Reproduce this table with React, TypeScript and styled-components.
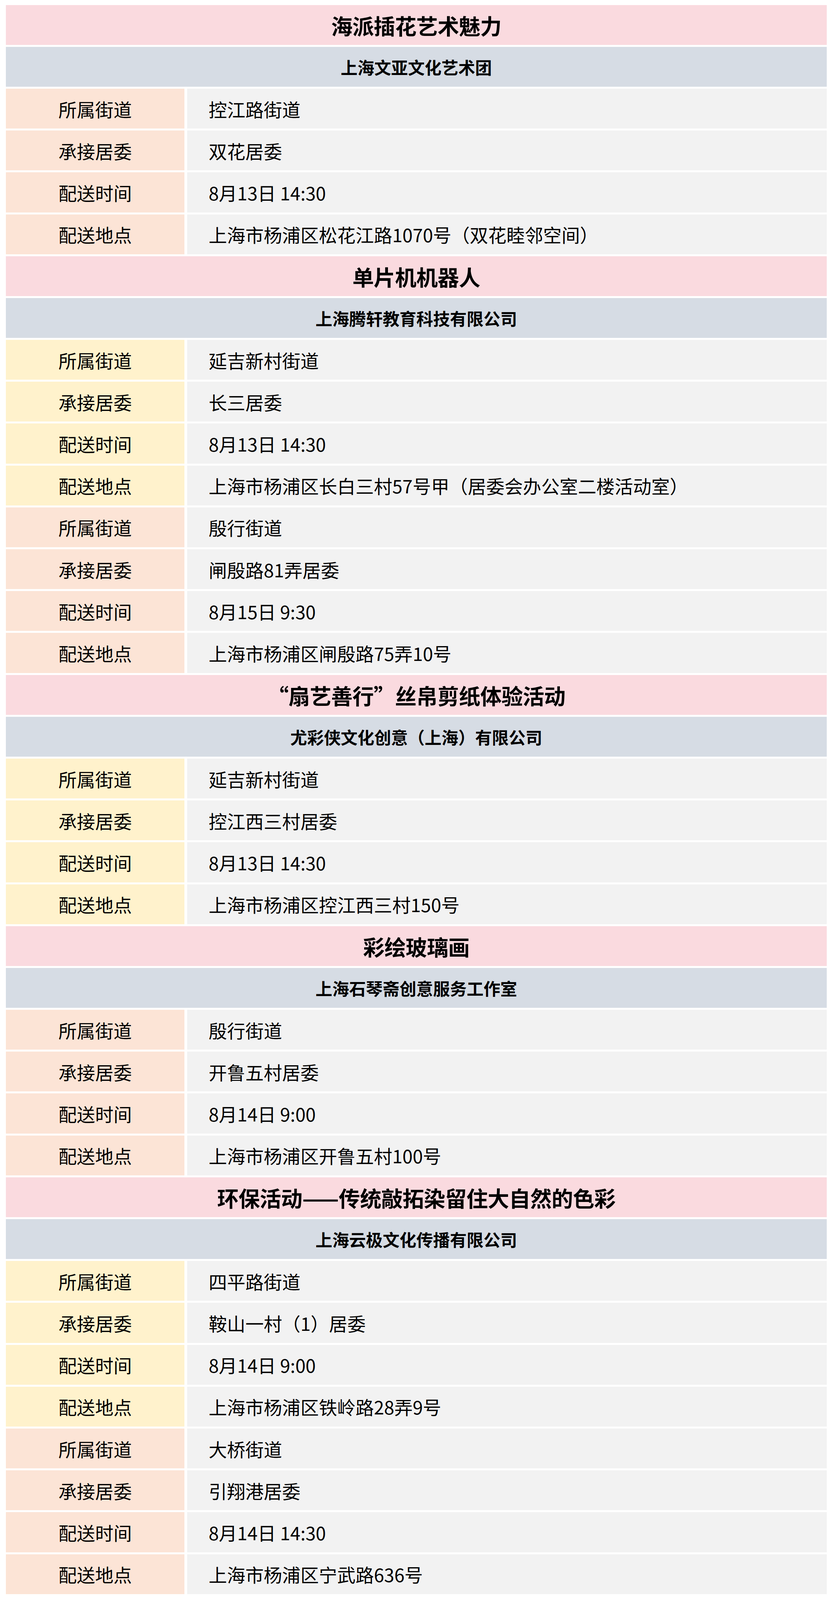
import React from "react";
import styled, { createGlobalStyle } from "styled-components";

const Global = createGlobalStyle`
  html, body { margin: 0; padding: 0; background: #ffffff; }
  body { font-family: "Noto Sans CJK SC", "Noto Sans", sans-serif; color: #000; }
`;

const Page = styled.div`
  padding: 12.6px 16px 12px 15px;
`;

const Table = styled.div`
  display: grid;
  grid-template-columns: 457px 1fr;
  grid-auto-rows: 102.2px;
  column-gap: 7px;
  row-gap: 5px;
`;

const TitleRow = styled.div`
  grid-column: 1 / span 2;
  background: #fadadf;
  display: flex;
  align-items: center;
  justify-content: center;
  font-size: 55px;
  font-weight: 700;
  letter-spacing: -0.5px;
`;

const OrgRow = styled.div`
  grid-column: 1 / span 2;
  background: #d6dce4;
  display: flex;
  align-items: center;
  justify-content: center;
  font-size: 43px;
  font-weight: 700;
  letter-spacing: 0;
`;

const Label = styled.div<{ $tone: "peach" | "yellow" }>`
  background: ${(p) => (p.$tone === "yellow" ? "#fff2cc" : "#fce4d6")};
  display: flex;
  align-items: center;
  justify-content: center;
  font-size: 47px;
  letter-spacing: 0;
`;

const Value = styled.div`
  background: #f2f2f2;
  display: flex;
  align-items: center;
  padding-left: 55px;
  font-size: 47px;
  letter-spacing: 0;
  white-space: nowrap;
`;

type Entry = { street: string; committee: string; time: string; place: string; tone: "peach" | "yellow" };
type Section = { title: string; org: string; entries: Entry[] };

const sections: Section[] = [
  {
    title: "海派插花艺术魅力",
    org: "上海文亚文化艺术团",
    entries: [
      { street: "控江路街道", committee: "双花居委", time: "8月13日 14:30", place: "上海市杨浦区松花江路1070号（双花睦邻空间）", tone: "peach" },
    ],
  },
  {
    title: "单片机机器人",
    org: "上海腾轩教育科技有限公司",
    entries: [
      { street: "延吉新村街道", committee: "长三居委", time: "8月13日 14:30", place: "上海市杨浦区长白三村57号甲（居委会办公室二楼活动室）", tone: "yellow" },
      { street: "殷行街道", committee: "闸殷路81弄居委", time: "8月15日 9:30", place: "上海市杨浦区闸殷路75弄10号", tone: "peach" },
    ],
  },
  {
    title: "“扇艺善行”丝帛剪纸体验活动",
    org: "尤彩侠文化创意（上海）有限公司",
    entries: [
      { street: "延吉新村街道", committee: "控江西三村居委", time: "8月13日 14:30", place: "上海市杨浦区控江西三村150号", tone: "yellow" },
    ],
  },
  {
    title: "彩绘玻璃画",
    org: "上海石琴斋创意服务工作室",
    entries: [
      { street: "殷行街道", committee: "开鲁五村居委", time: "8月14日 9:00", place: "上海市杨浦区开鲁五村100号", tone: "peach" },
    ],
  },
  {
    title: "环保活动——传统敲拓染留住大自然的色彩",
    org: "上海云极文化传播有限公司",
    entries: [
      { street: "四平路街道", committee: "鞍山一村（1）居委", time: "8月14日 9:00", place: "上海市杨浦区铁岭路28弄9号", tone: "yellow" },
      { street: "大桥街道", committee: "引翔港居委", time: "8月14日 14:30", place: "上海市杨浦区宁武路636号", tone: "peach" },
    ],
  },
];

export default function App() {
  return (
    <Page>
      <Global />
      <Table>
        {sections.map((s, si) => (
          <React.Fragment key={si}>
            <TitleRow>{s.title}</TitleRow>
            <OrgRow>{s.org}</OrgRow>
            {s.entries.map((e, ei) => (
              <React.Fragment key={ei}>
                <Label $tone={e.tone}>所属街道</Label>
                <Value>{e.street}</Value>
                <Label $tone={e.tone}>承接居委</Label>
                <Value>{e.committee}</Value>
                <Label $tone={e.tone}>配送时间</Label>
                <Value>{e.time}</Value>
                <Label $tone={e.tone}>配送地点</Label>
                <Value>{e.place}</Value>
              </React.Fragment>
            ))}
          </React.Fragment>
        ))}
      </Table>
    </Page>
  );
}
